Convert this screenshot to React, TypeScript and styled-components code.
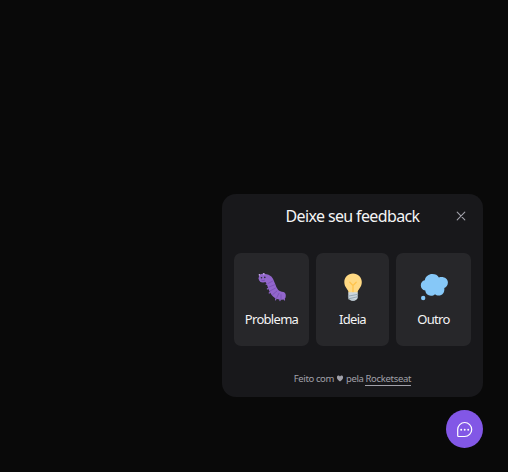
import React from 'react';
import styled, { createGlobalStyle } from 'styled-components';

const GlobalStyle = createGlobalStyle`
  *, *::before, *::after { box-sizing: border-box; }
  html { background: #fff; }
  body { margin: 0; font-family: 'Noto Sans', 'Open Sans', sans-serif; overflow: hidden; }
  button { font: inherit; border: 0; padding: 0; cursor: pointer; }
`;

const Page = styled.main`
  width: 508px;
  height: 472px;
  padding: 0 25px 24px 0;
  background: #090909;
  display: flex;
  flex-direction: column;
  justify-content: flex-end;
  align-items: flex-end;
  gap: 13px;
`;

const Panel = styled.section`
  width: 261px;
  height: 203px;
  padding: 11px 12px 0;
  border-radius: 14px;
  background: #18181b;
  display: flex;
  flex-direction: column;
`;

const Header = styled.header`
  height: 22px;
  display: grid;
  grid-template-columns: 24px 1fr 24px;
  align-items: center;
`;

const Title = styled.h1`
  grid-column: 2;
  margin: 0;
  font-size: 16px;
  line-height: 22px;
  font-weight: 400;
  letter-spacing: -0.63px;
  color: #f4f4f5;
  text-align: center;
  white-space: nowrap;
`;

const CloseButton = styled.button`
  background: none;
  width: 10px;
  height: 10px;
  margin-left: 9px;
  color: #a1a1aa;
  display: flex;
  svg { width: 10px; height: 10px; }
`;

const Options = styled.div`
  margin-top: 26px;
  display: grid;
  grid-template-columns: 75px 73px 75px;
  gap: 7px;
`;

const Option = styled.button`
  height: 93px;
  padding-top: 19px;
  border-radius: 7px;
  background: #27272a;
  color: #f4f4f5;
  display: flex;
  flex-direction: column;
  align-items: center;
  gap: 8px;
  svg { width: 30px; height: 30px; flex: none; }
`;

const OptionLabel = styled.span<{ $spacing: number }>`
  font-size: 13px;
  line-height: 18px;
  letter-spacing: ${(p) => p.$spacing}px;
`;

const Footer = styled.footer`
  margin-top: 26px;
  display: flex;
  justify-content: center;
  align-items: flex-start;
  gap: 2px;
  font-size: 9.5px;
  line-height: 13px;
  letter-spacing: -0.38px;
  color: #a1a1aa;
  svg { width: 8px; height: 7px; margin-top: 3px; }
`;

const FooterLink = styled.a`
  color: inherit;
  letter-spacing: -0.3px;
  border-bottom: 1px solid #a1a1aa;
`;

const Launcher = styled.button`
  width: 37px;
  height: 38px;
  border-radius: 50%;
  background: #8257e6;
  color: #fff;
  display: flex;
  align-items: center;
  justify-content: center;
  svg { width: 17px; height: 17px; }
`;

const BugIcon = () => (
  <svg viewBox="0 0 30 30" fill="none" strokeLinecap="round">
    <path d="M4 4 2.6 2.8M7.500 3.500 6.800 1.900" stroke="#b79ad6" strokeWidth="1" />
    <path d="M6.200 6C11.500 5.300 12.800 8.500 14.300 13c1.700 5.800 4 10.700 10.500 10.700" stroke="#9266cc" strokeWidth="8" />
    <circle cx="6" cy="6.200" r="4.400" fill="#9266cc" />
    <path d="m11 11.500 4.500-2.300M12 15l5.500-2.200M13.300 18.800l5-2.600M15.600 22.700l4.300-3.700M19.600 26l2.300-4.600M24 26.800v-4" stroke="#7a50b5" strokeWidth=".9" />
    <path d="m19 26.300-.4 1.500M23 27.300v1.300M27 26.800l.5 1.200M10 12l-.8.300M11.200 16.500l-.8.400M13 20.500l-.8.500" stroke="#9266cc" strokeWidth="1.200" />
    <circle cx="4.500" cy="5.800" r=".8" fill="#292f33" />
    <circle cx="7.800" cy="5.400" r=".8" fill="#292f33" />
    <path d="M4.600 8.300c1 .5 2 .4 3-.1" stroke="#6a45a0" strokeWidth=".6" />
    <circle cx="2.500" cy="2.800" r=".9" fill="#c5a7e8" />
    <circle cx="6.800" cy="1.800" r=".9" fill="#c5a7e8" />
  </svg>
);

const IdeaIcon = () => (
  <svg viewBox="0 0 30 30" fill="none">
    <path d="M15 1.600c-5 0-8.700 3.800-8.700 8.400 0 6.100 4.400 6.800 4.400 11.500h8.800c0-4.700 4.300-5.400 4.300-11.500 0-4.600-3.800-8.400-8.800-8.400Z" fill="#ffd983" />
    <path d="M15 20.500v-7l-3.200-3.200m3.200 3.200 3.200-3.200" stroke="#ffc44c" strokeWidth="1.300" strokeLinecap="round" />
    <path d="M10.300 20.200h9.400v5.600c0 1.400-2.100 3-4.700 3s-4.700-1.600-4.700-3Z" fill="#ccd6dd" />
    <path d="m9.900 24.200 10.200-2M10.300 26.900l9.400-2.200" stroke="#99aab5" strokeWidth="1.100" />
    <path d="M12.200 27.600h5.600c-.6 1-1.600 1.400-2.800 1.400s-2.200-.4-2.800-1.400Z" fill="#aebbc3" />
  </svg>
);

const ThoughtIcon = () => (
  <svg viewBox="0 0 30 30" fill="#86c8f8">
    <path d="M5.800 8.200C6.500 4.300 9.700 2 13.300 2c3 0 5.400 1.200 6.600 3.400 4.400-1.300 9 .8 9 5.200 0 3-1.600 4.700-3.600 5.400.6 4.500-2 7.600-5.700 7.600-1.500 0-2.700-.5-3.600-1.400-1.100 1-2.500 1.500-4 1.500-3.200 0-5.500-2-5.700-5.100C3.500 18.200 1.800 16 1.800 13.200c0-2.700 1.600-4.600 4-5Z" />
    <circle cx="4.200" cy="26" r="2.200" />
  </svg>
);

const CloseIcon = () => (
  <svg viewBox="0 0 10 10" stroke="currentColor" strokeWidth="1.1" strokeLinecap="round">
    <path d="m1.200 1.200 7.600 7.600M8.800 1.200 1.200 8.800" />
  </svg>
);

const HeartIcon = () => (
  <svg viewBox="0 0 8 7" fill="currentColor">
    <path d="M4 6.600C2.100 5.300.900 3.900.900 2.300.900.400 3.200 0 4 1.500 4.800 0 7.100.400 7.100 2.300 7.100 3.900 5.900 5.300 4 6.600Z" />
  </svg>
);

const ChatIcon = () => (
  <svg viewBox="0 0 17 17" fill="none">
    <path
      d="M8.700 1.500a7 7 0 0 1 0 14H2.600a.900.900 0 0 1-.900-.900V8.500a7 7 0 0 1 7-7Z"
      stroke="currentColor"
      strokeWidth="1.200"
    />
    <g fill="currentColor">
      <circle cx="5.200" cy="8.700" r=".95" />
      <circle cx="8.700" cy="8.700" r=".95" />
      <circle cx="12.200" cy="8.700" r=".95" />
    </g>
  </svg>
);

const options = [
  { label: 'Problema', spacing: -0.7, Icon: BugIcon },
  { label: 'Ideia', spacing: -0.7, Icon: IdeaIcon },
  { label: 'Outro', spacing: -0.7, Icon: ThoughtIcon },
];

export default function App() {
  return (
    <>
      <GlobalStyle />
      <Page>
        <Panel>
          <Header>
            <Title>Deixe seu feedback</Title>
            <CloseButton aria-label="Fechar">
              <CloseIcon />
            </CloseButton>
          </Header>
          <Options>
            {options.map(({ label, spacing, Icon }) => (
              <Option key={label}>
                <Icon />
                <OptionLabel $spacing={spacing}>{label}</OptionLabel>
              </Option>
            ))}
          </Options>
          <Footer>
            <span>Feito com</span>
            <HeartIcon />
            <span>pela</span>
            <FooterLink>Rocketseat</FooterLink>
          </Footer>
        </Panel>
        <Launcher aria-label="Enviar feedback">
          <ChatIcon />
        </Launcher>
      </Page>
    </>
  );
}
